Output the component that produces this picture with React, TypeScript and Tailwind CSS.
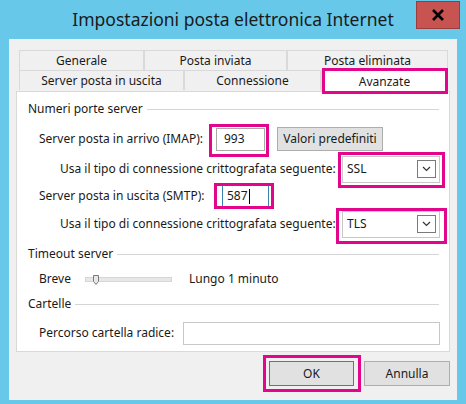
import { ReactNode } from 'react'

const font = { fontFamily: '"Noto Sans", "Open Sans", sans-serif' }

// magenta annotation frame laid over a control
const Mark = ({ className }: { className: string }) => (
  <span className={`pointer-events-none absolute border-[3px] border-[#e3068c] ${className}`}></span>
)

const GroupTitle = ({ title }: { title: string }) => (
  <div className="flex h-[20px] items-center pr-[10px]">
    <span className="pr-[4px] text-[12px]">{title}</span>
    <div className="h-px flex-1 bg-[#d5d5d5]"></div>
  </div>
)

const Select = ({ value }: { value: string }) => (
  <div className="flex h-[27px] w-[98px] items-center justify-between border border-[#c8c8c8] bg-white pr-[3px] pl-[4px]">
    <span className="text-[12px]">{value}</span>
    <div className="flex h-[18px] w-[19px] items-center justify-center border border-[#7a7a7a]">
      <svg width="9" height="6" viewBox="0 0 9 6">
        <path d="M1 1 L4.5 4.5 L8 1" fill="none" stroke="#333" strokeWidth="1.2" />
      </svg>
    </div>
  </div>
)

const Tab = ({ label, w, selected, children }: { label: string; w: string; selected?: boolean; children?: ReactNode }) => (
  <div
    className={`relative flex h-[20px] items-center justify-center border border-b-0 border-[#d9d9d9] text-[12px] ${w} ${
      selected ? 'bg-white' : 'bg-[#f0f0f0]'
    }`}
  >
    {label}
    {children}
  </div>
)

const App = () => {
  return (
    <div className="flex h-[404px] w-[466px] flex-col bg-[#67c8ea] text-[#1a1a1a]" style={font}>
      {/* title bar */}
      <div className="relative flex h-[39px] items-center justify-center">
        <span className="text-[17.5px] text-[#1a1a1a]">Impostazioni posta elettronica Internet</span>
        <div className="absolute top-[1px] right-[6px] flex h-[28px] w-[44px] items-center justify-center border border-[#9b3b3b] bg-[#c75450]">
          <svg width="14" height="12" viewBox="0 0 14 12">
            <path d="M2 1 L12 11 M12 1 L2 11" stroke="#000" strokeWidth="2.6" />
          </svg>
        </div>
      </div>

      {/* client area */}
      <div className="mx-[9px] flex h-[361px] flex-col bg-[#f0f0f0] pt-[11px]">
        {/* tabs */}
        <div className="flex flex-col pl-[10px]">
          <div className="flex">
            <Tab label="Generale" w="w-[125px]" />
            <Tab label="Posta inviata" w="w-[143px]" />
            <Tab label="Posta eliminata" w="w-[161px]" />
          </div>
          <div className="flex">
            <Tab label="Server posta in uscita" w="w-[165px]" />
            <Tab label="Connessione" w="w-[137px]" />
            <Tab label="Avanzate" w="w-[127px] h-[22px] -mb-px z-10" selected>
              <Mark className="-top-[3px] -right-[1px] -bottom-[2px] left-0" />
            </Tab>
          </div>
        </div>

        {/* panel */}
        <div className="ml-[7px] flex h-[261px] w-[434px] flex-col border border-[#d9d9d9] bg-white pt-[7px] pl-[11px]">
          <GroupTitle title="Numeri porte server" />

          <div className="mt-[5px] flex h-[30px] items-center pl-[11px]">
            <span className="w-[177px] text-[12px]">Server posta in arrivo (IMAP):</span>
            <div className="relative flex h-[23px] w-[49px] items-center border border-[#a9a9a9] bg-white pl-[7px] text-[12px]">
              993
              <Mark className="-top-[5px] -right-[5px] -bottom-[7px] -left-[8px]" />
            </div>
            <div className="ml-[12px] flex h-[24px] w-[106px] items-center justify-center border border-[#adadad] bg-[#e1e1e1] text-[12px]">
              Valori predefiniti
            </div>
          </div>

          <div className="flex h-[30px] items-center pl-[32px]">
            <span className="w-[282px] text-[12px]">Usa il tipo di connessione crittografata seguente:</span>
            <div className="relative">
              <Select value="SSL" />
              <Mark className="-top-[4px] -right-[5px] -bottom-[5px] -left-[4px]" />
            </div>
          </div>

          <div className="flex h-[24px] items-center pl-[11px]">
            <span className="w-[183px] text-[12px]">Server posta in uscita (SMTP):</span>
            <div className="relative flex h-[22px] w-[47px] items-center border border-[#3c7fb1] bg-white pl-[4px] text-[12px]">
              587<span className="ml-px h-[15px] w-px bg-black"></span>
              <Mark className="-top-[3px] -right-[6px] -bottom-[3px] -left-[9px]" />
            </div>
          </div>

          <div className="mt-[2px] flex h-[28px] items-center pl-[32px]">
            <span className="w-[282px] text-[12px]">Usa il tipo di connessione crittografata seguente:</span>
            <div className="relative">
              <Select value="TLS" />
              <Mark className="-top-[3px] -right-[7px] -bottom-[6px] -left-[6px]" />
            </div>
          </div>

          <div className="mt-[6px]">
            <GroupTitle title="Timeout server" />
          </div>
          <div className="mt-[5px] flex h-[20px] items-center pl-[11px] text-[12px]">
            <span className="w-[46px]">Breve</span>
            <div className="relative h-[5px] w-[87px] border border-[#d6d6d6] bg-[#e7e7e7]">
              <svg className="absolute -top-[3px] left-[7px]" width="6" height="10" viewBox="0 0 6 10">
                <path d="M0.5 0.5 H5.5 V6.5 L3 9.5 L0.5 6.5 Z" fill="#e7e7e7" stroke="#7a7a7a" />
              </svg>
            </div>
            <span className="ml-[17px]">Lungo 1 minuto</span>
          </div>

          <div className="mt-[5px]">
            <GroupTitle title="Cartelle" />
          </div>
          <div className="mt-[7px] flex h-[24px] items-center pl-[11px]">
            <span className="w-[144px] text-[12px]">Percorso cartella radice:</span>
            <div className="h-[23px] w-[257px] border border-[#c8c8c8] bg-white"></div>
          </div>
        </div>

        {/* buttons */}
        <div className="mt-[9px] flex justify-end gap-[10px] pr-[7px]">
          <div className="relative flex h-[25px] w-[85px] items-center justify-center border border-[#3c7fb1] bg-[#e1e1e1] text-[12px]">
            OK
            <Mark className="-top-[7px] -right-[8px] -bottom-[7px] -left-[7px]" />
          </div>
          <div className="flex h-[25px] w-[86px] items-center justify-center border border-[#adadad] bg-[#e1e1e1] text-[12px]">
            Annulla
          </div>
        </div>
      </div>
    </div>
  )
}

export default App
